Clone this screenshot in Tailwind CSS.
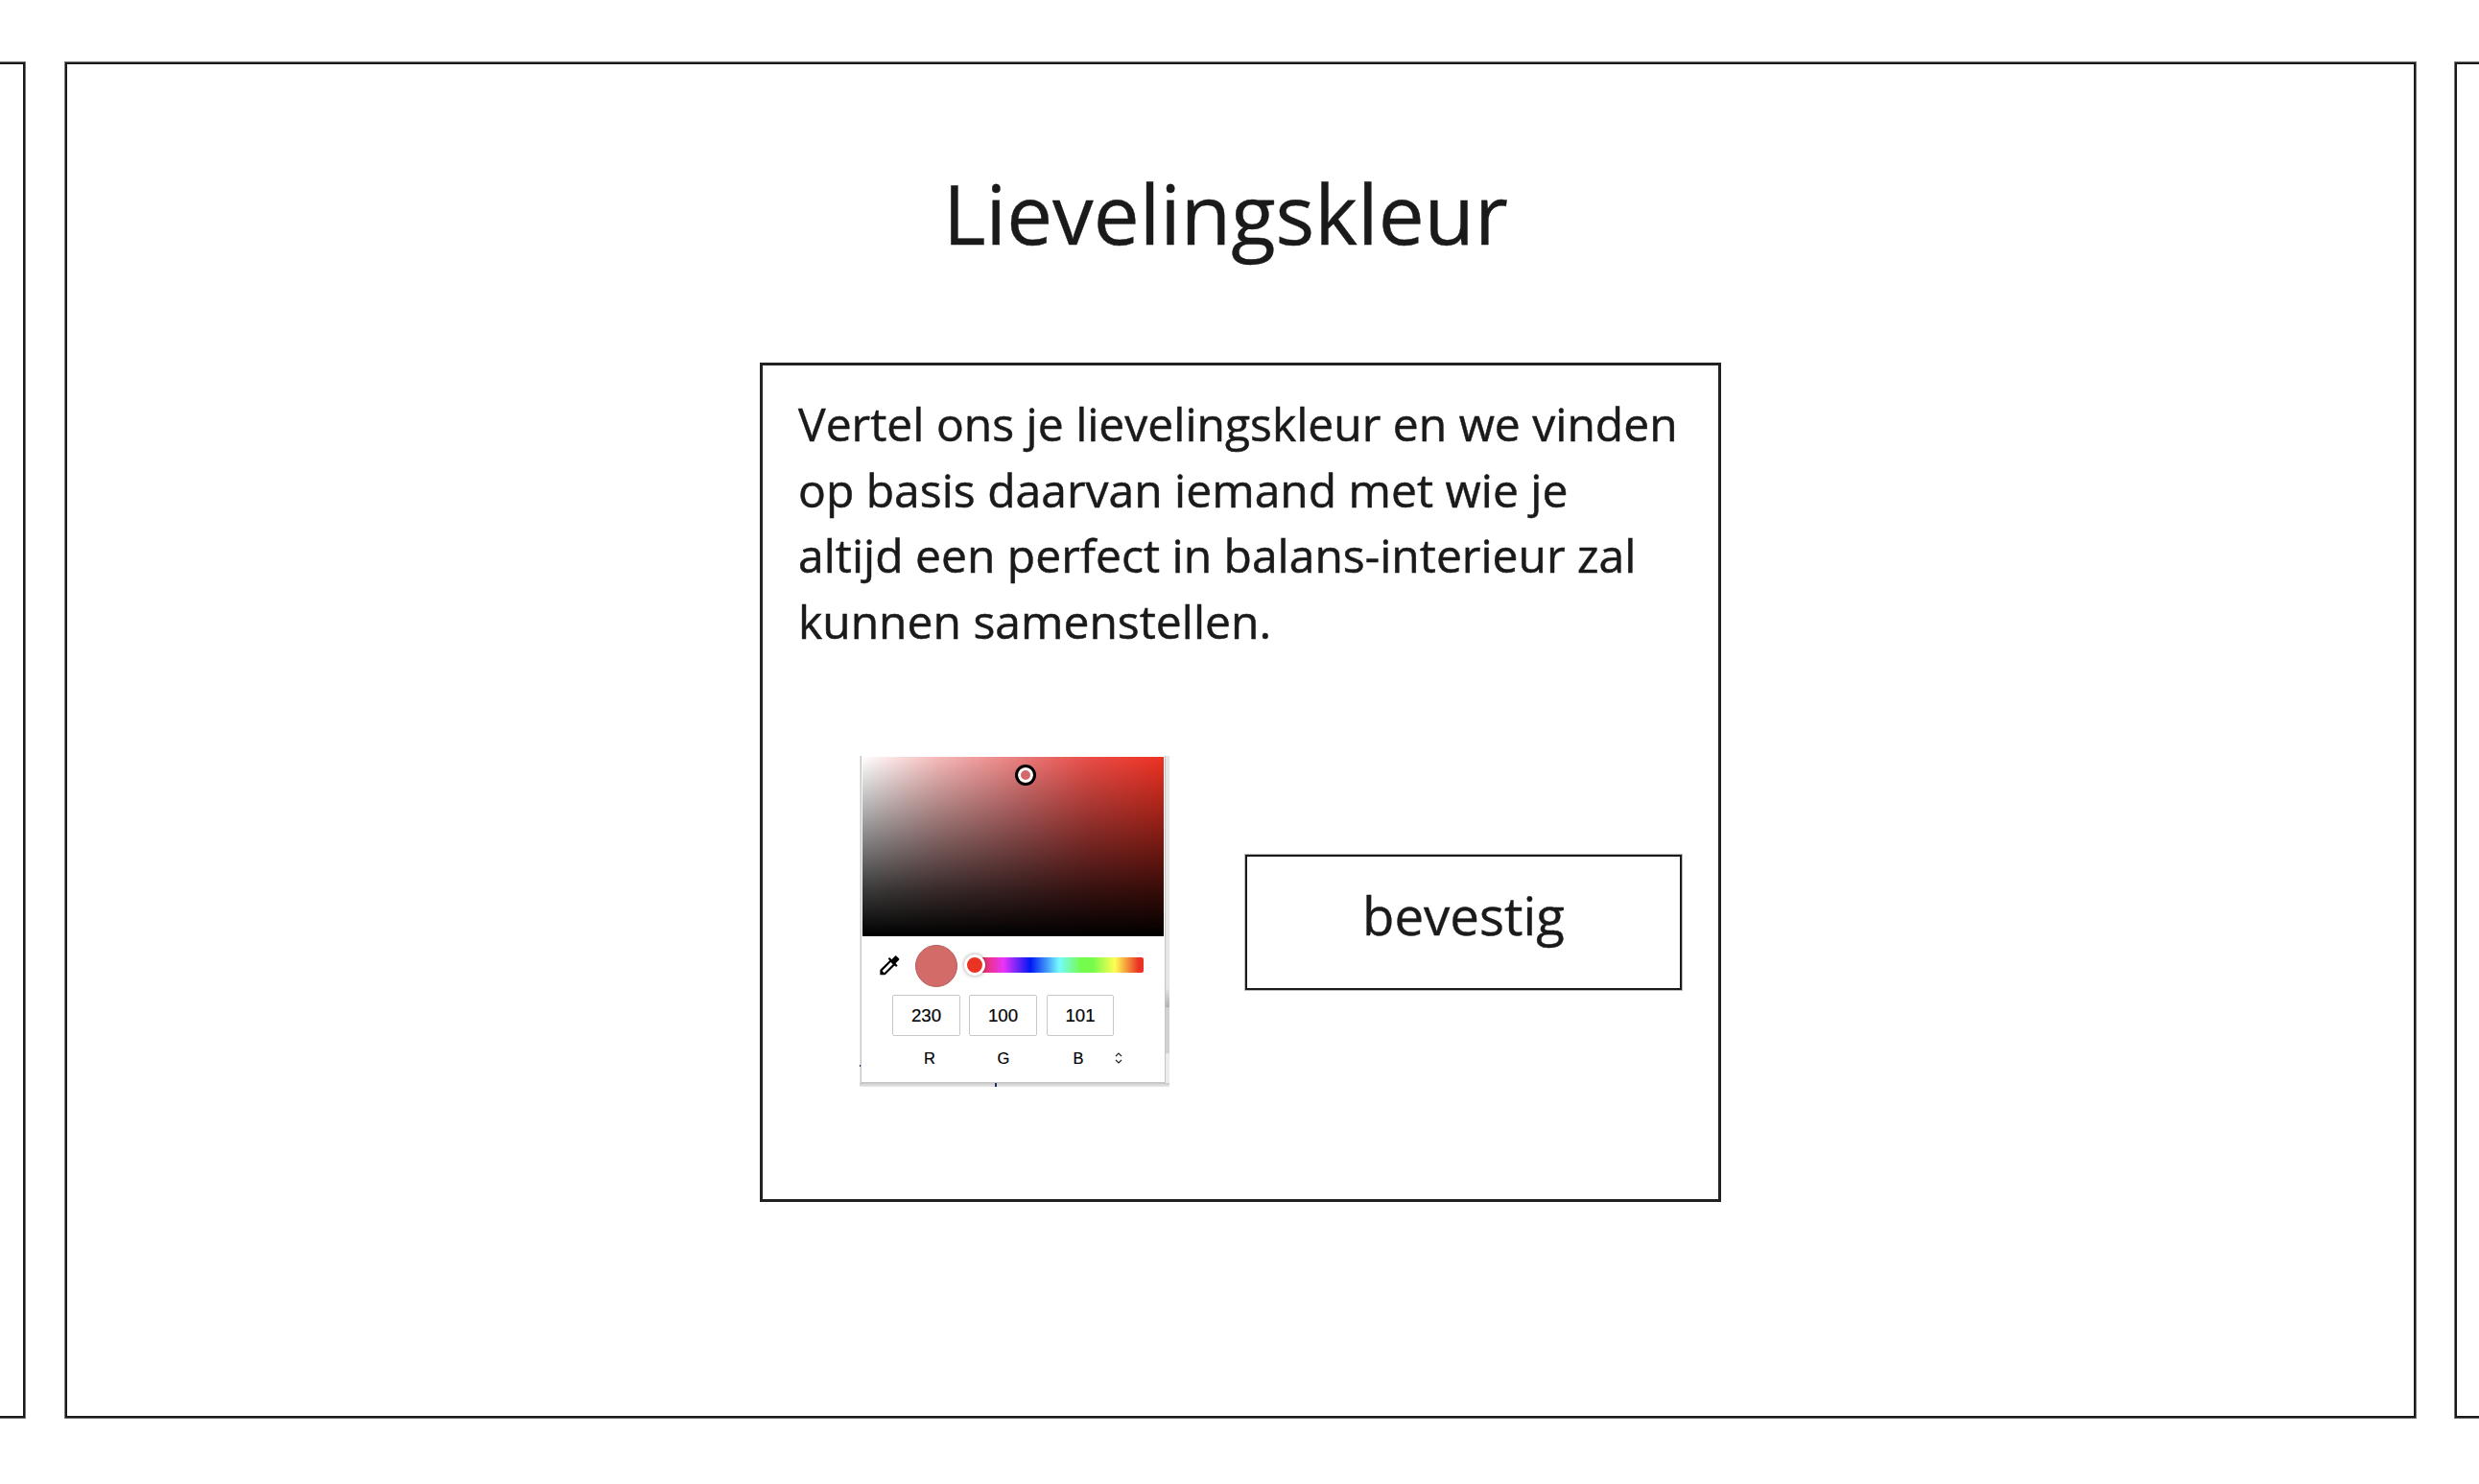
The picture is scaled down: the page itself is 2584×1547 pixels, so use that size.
<!DOCTYPE html>
<html lang="nl">
<head>
<meta charset="utf-8">
<title>Lievelingskleur</title>
<script src="https://cdn.jsdelivr.net/npm/@tailwindcss/browser@4"></script>
</head>
<body class="bg-white text-[#1a1a1a] font-['Open_Sans',sans-serif] overflow-hidden">
<div class="flex w-[2584px] h-[1547px] pt-[65px] overflow-hidden">
  <section class="w-[26px] h-[1413px] shrink-0 border-2 border-l-0 border-[#1a1a1a] ring-1 ring-[#777]"></section>
  <main class="ml-[42px] w-[2450px] h-[1413px] shrink-0 border-2 border-[#1a1a1a] ring-1 ring-[#777] flex flex-col">
    <h1 class="mt-[95px] ml-[913px] h-[120px] leading-[120px] text-[85.4px] whitespace-nowrap [-webkit-text-stroke:0.4px_#1a1a1a]">Lievelingskleur</h1>
    <div class="mt-[96px] ml-[722px] w-[1002px] h-[875px] border-3 border-[#222] pt-[27px] pl-[37px]">
      <p class="text-[48.02px] leading-[68.66px] whitespace-nowrap [-webkit-text-stroke:0.5px_#1a1a1a]">Vertel ons je lievelingskleur en we vinden<br>op basis daarvan iemand met wie je<br>altijd een perfect in balans-interieur zal<br>kunnen samenstellen.</p>
      <div class="flex mt-[105.36px] pl-[64px]">
        <!-- colour picker -->
        <div class="relative w-[323px] h-[345px] shrink-0 bg-[#e6e6e6] pl-px">
          <div class="absolute right-0 top-[242px] w-[5px] h-[20px] bg-linear-to-b from-[#e6e6e6] to-[#b0b0b0]"></div>
          <div class="absolute right-0 top-[262px] w-[5px] h-[48px] bg-[#d2d2d2]"></div>
          <div class="absolute right-0 top-[310px] w-[5px] h-[35px] bg-[#ececec]"></div>
          <div class="absolute left-0 bottom-0 w-[323px] h-[4px] bg-linear-to-b from-[#c8c8c8] to-[#ebebeb]"></div>
          <div class="absolute left-[141px] bottom-0 w-[2px] h-[4px] bg-[#1d3461]"></div>
          <div class="absolute left-0 top-[322px] w-px h-[2px] bg-[#1d3461]"></div>
          <div class="relative w-[318px] h-[341px] pt-px bg-white border-x border-b border-[#c4c4c4] font-['Liberation_Sans',sans-serif] text-black">
            <div class="relative ml-px mr-px h-[187px] bg-[linear-gradient(to_top,#000,rgba(0,0,0,0.78)_25%,rgba(0,0,0,0.52)_50%,transparent),linear-gradient(to_right,#fff,#f5b9b9_25%,#ea7b7b_53%,#ea4d47_75%,#ee3122)]">
              <div class="absolute left-[159px] top-[8px] size-[22px] rounded-full border-3 border-black bg-[#d36b6b] shadow-[inset_0_0_0_3px_#fff]"></div>
            </div>
            <div class="flex items-center h-[60px] mt-px pl-[16px]">
              <svg class="size-[26.7px] mb-[2px]" viewBox="0 0 24 24" fill="#000"><path d="M20.71 5.63l-2.34-2.34c-.39-.39-1.02-.39-1.41 0l-3.12 3.12-1.93-1.91-1.41 1.41 1.42 1.42L3 16.25V21h4.75l8.92-8.92 1.42 1.42 1.41-1.41-1.92-1.92 3.12-3.12c.4-.4.4-1.03.01-1.42zM6.92 19L5 17.08l8.06-8.06 1.92 1.92L6.92 19z"/></svg>
              <div class="ml-[13px] size-[44px] rounded-full bg-[#d36b68] border border-[#b35d5b]"></div>
              <div class="relative ml-[18px] w-[176px] h-[16px] mb-[2px] rounded-xs bg-[linear-gradient(to_right,#ea3323,#ea33f7_17%,#0018f5_33%,#75fbfd_50%,#75fb4c_63%,#75fb4c_70%,#fffe54_83%,#ea3323_97%)]">
                <div class="absolute -left-[11px] -top-[3px] size-[22px] rounded-full bg-[#ea3323] border-3 border-white shadow-[0_0_4px_rgba(0,0,0,0.4)]"></div>
              </div>
            </div>
            <div class="flex pl-[32px] text-[18.7px] leading-[42px] text-center [-webkit-text-stroke:0.2px_#000]">
              <div class="w-[71px] h-[43px] border border-[#c8c8c8] rounded-xs">230</div>
              <div class="ml-[9px] w-[71px] h-[43px] border border-[#c8c8c8] rounded-xs">100</div>
              <div class="ml-[10px] w-[70px] h-[43px] border border-[#c8c8c8] rounded-xs">101</div>
            </div>
            <div class="flex items-center h-[20px] mt-[13px] pl-[61px] text-[16.5px] leading-[20px] text-center [-webkit-text-stroke:0.2px_#000]">
              <span class="w-[20px]">R</span>
              <span class="ml-[57px] w-[20px]">G</span>
              <span class="ml-[58px] w-[20px]">B</span>
              <svg class="ml-[28px] w-[8px] h-[12px]" viewBox="0 0 8 12" fill="none" stroke="#222" stroke-width="1.2"><path d="M1 4l3-3 3 3M1 8l3 3 3-3"/></svg>
            </div>
          </div>
        </div>
        <!-- confirm button -->
        <button class="ml-[79px] mt-[103px] w-[455px] h-[141px] border-2 border-[#1a1a1a] ring-1 ring-[#bbb] text-[54.6px] leading-[75px] pb-[14px] [-webkit-text-stroke:0.4px_#1a1a1a]">bevestig</button>
      </div>
    </div>
  </main>
  <section class="ml-[41px] w-[41px] h-[1413px] shrink-0 border-2 border-r-0 border-[#1a1a1a] ring-1 ring-[#777]"></section>
</div>
</body>
</html>
